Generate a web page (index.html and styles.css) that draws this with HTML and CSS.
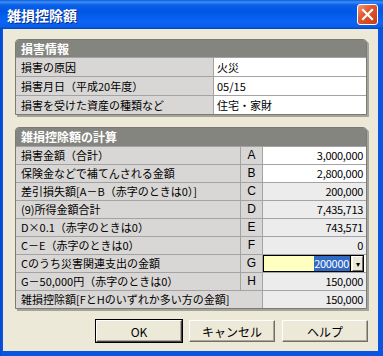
FILE: index.html
```html
<!DOCTYPE html>
<html lang="ja">
<head>
  <meta charset="UTF-8">
  <title>雑損控除額</title>
  <link rel="stylesheet" href="styles.css">
</head>
<body>

  <div class="window">
    <div class="titlebar">
      <span class="title">雑損控除額</span>
      <span class="close">
        <svg width="21" height="21" viewBox="0 0 21 21">
          <path d="M6 6 L15 15 M15 6 L6 15" stroke="#fff" stroke-width="2.2" stroke-linecap="square"/>
        </svg>
      </span>
    </div>

    <div class="frame">
      <div class="client">

        <div class="panel info">
          <div class="panel-head">損害情報</div>
          <div class="row">
            <div class="label">損害の原因</div>
            <div class="value">火災</div>
          </div>
          <div class="row">
            <div class="label">損害月日（平成20年度）</div>
            <div class="value">05/15</div>
          </div>
          <div class="row">
            <div class="label">損害を受けた資産の種類など</div>
            <div class="value">住宅・家財</div>
          </div>
        </div>

        <div class="panel calc">
          <div class="panel-head">雑損控除額の計算</div>
          <div class="row">
            <div class="label">損害金額（合計）</div>
            <div class="key">A</div>
            <div class="value num">3,000,000</div>
          </div>
          <div class="row">
            <div class="label">保険金などで補てんされる金額</div>
            <div class="key">B</div>
            <div class="value num">2,800,000</div>
          </div>
          <div class="row">
            <div class="label">差引損失額[A－B（赤字のときは0）]</div>
            <div class="key">C</div>
            <div class="value num calc-val">200,000</div>
          </div>
          <div class="row">
            <div class="label">(9)所得金額合計</div>
            <div class="key">D</div>
            <div class="value num calc-val">7,435,713</div>
          </div>
          <div class="row">
            <div class="label">D×0.1（赤字のときは0）</div>
            <div class="key">E</div>
            <div class="value num calc-val">743,571</div>
          </div>
          <div class="row">
            <div class="label">C－E（赤字のときは0）</div>
            <div class="key">F</div>
            <div class="value num calc-val">0</div>
          </div>
          <div class="row">
            <div class="label">Cのうち災害関連支出の金額</div>
            <div class="key">G</div>
            <div class="value combo-cell">
              <div class="combo">
                <span class="sel">200000</span><span class="caret"></span>
                <span class="drop">▾</span>
              </div>
            </div>
          </div>
          <div class="row">
            <div class="label">G－50,000円（赤字のときは0）</div>
            <div class="key">H</div>
            <div class="value num calc-val">150,000</div>
          </div>
          <div class="row">
            <div class="label wide">雑損控除額[FとHのいずれか多い方の金額]</div>
            <div class="value num calc-val">150,000</div>
          </div>
        </div>

        <div class="buttons">
          <button class="default">OK</button>
          <button>キャンセル</button>
          <button>ヘルプ</button>
        </div>

      </div>
    </div>
  </div>

</body>
</html>
```

FILE: styles.css
```css
body {
  margin: 0;
  font-family: "Noto Sans CJK JP", "Liberation Sans", sans-serif;
  font-size: 11px;
  color: #000;
  background: #ece9d8;
}

.window {
  width: 383px;
  height: 356px;
  display: flex;
  flex-direction: column;
  background: #0a4fd6;
}

/* title bar */
.titlebar {
  height: 29px;
  display: flex;
  align-items: center;
  justify-content: space-between;
  padding: 0 5px 0 7px;
  box-sizing: border-box;
  background: linear-gradient(#0a5ad8 0, #3d8ef5 2px, #0a5fe8 5px, #0057e6 40%, #0a64f4 75%, #0a5ee8 92%, #0044c4 100%);
}

.title {
  color: #fff;
  font-weight: bold;
  font-size: 14px;
  text-shadow: 1px 1px 0 #0a2a8a;
}

.close {
  width: 21px;
  height: 21px;
  box-sizing: border-box;
  border: 1px solid #fff;
  border-radius: 3px;
  background: linear-gradient(135deg, #f09a7e 0, #e0582f 40%, #c83c14 100%);
  display: flex;
}

.close svg {
  margin: -1px;
}

.frame {
  flex: 1;
  display: flex;
  padding: 0 5px 5px 3px;
  background: linear-gradient(90deg, #0845c8, #0a55e0 2px);
}

.client {
  flex: 1;
  background: #ece9d8;
  padding: 10px 10px 0 12px;
}

/* panels */
.panel {
  width: 352px;
  box-sizing: border-box;
  border: 1px solid #7b7a74;
  border-radius: 4px 4px 0 0;
  background: #d9d7d5;
  box-shadow: 2px 2px 0 #a5a39a;
}

.panel.calc {
  margin-top: 12px;
}

.panel-head {
  height: 17px;
  line-height: 17px;
  padding-left: 5px;
  background: #858580;
  color: #fff;
  font-size: 12px;
  font-weight: bold;
  border-radius: 3px 3px 0 0;
}

.calc .panel-head {
  height: 18px;
  line-height: 18px;
}

.row {
  display: grid;
  box-sizing: border-box;
  border-top: 1px solid #a3a3a3;
}

.info .row {
  height: 19px;
  grid-template-columns: 197px 1fr;
}

.calc .row {
  height: 18px;
  grid-template-columns: 224px 22px 1fr;
}

.row > div {
  line-height: 17px;
  white-space: nowrap;
  overflow: hidden;
}

.info .row > div {
  line-height: 18px;
}

.label {
  padding-left: 5px;
}

.label.wide {
  grid-column: span 2;
}

.key {
  border-left: 1px solid #a3a3a3;
  text-align: center;
  font-family: "Liberation Sans", sans-serif;
  font-size: 12px;
}

.value {
  border-left: 1px solid #a3a3a3;
  background: #fff;
  padding: 0 3px;
}

.num {
  text-align: right;
  letter-spacing: -0.3px;
}

.calc-val {
  background: #ececec;
}

/* combo in row G */
.combo-cell {
  padding: 0;
  background: #fff;
}

.combo {
  margin: 0 2px 0 0;
  height: 17px;
  box-sizing: border-box;
  border: 1px solid #000;
  background: #ffffc0;
  display: flex;
  justify-content: flex-end;
  align-items: stretch;
  line-height: 15px;
}

.sel {
  background: #316ac5;
  color: #fff;
  letter-spacing: -0.3px;
  padding-right: 1px;
}

.caret {
  width: 1px;
  background: #000;
}

.drop {
  width: 11px;
  margin-left: 1px;
  box-sizing: border-box;
  background: #ece9d8;
  border: 1px solid;
  border-color: #fff #716f64 #716f64 #fff;
  font-size: 8px;
  line-height: 13px;
  text-align: center;
}

/* buttons */
.buttons {
  display: flex;
  justify-content: flex-end;
  gap: 7px;
  margin-top: 11px;
}

button {
  width: 86px;
  height: 22px;
  padding: 0;
  font-family: "Noto Sans CJK JP", sans-serif;
  font-size: 12px;
  background: #ece9d8;
  border: 1px solid;
  border-color: #fff #716f64 #716f64 #fff;
  box-shadow: inset -1px -1px 0 #aca899;
}

button.default {
  outline: 1px solid #000;
  outline-offset: 0;
  border-color: #fff #404040 #404040 #fff;
}
```
